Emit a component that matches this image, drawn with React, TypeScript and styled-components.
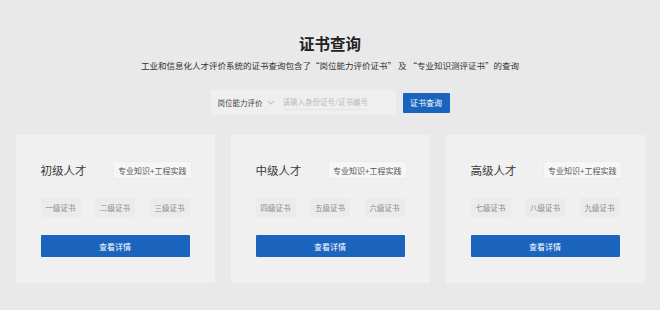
import React from 'react';
import styled, { createGlobalStyle } from 'styled-components';

const GlobalStyle = createGlobalStyle`
  html, body {
    margin: 0;
    padding: 0;
    background: #e9e9e9;
  }
  body {
    font-family: "Noto Sans CJK SC", "Noto Sans", sans-serif;
  }
`;

const Page = styled.div`
  width: 660px;
  height: 310px;
  padding-top: 33px;
  box-sizing: border-box;
  display: flex;
  flex-direction: column;
  align-items: center;
`;

const Title = styled.h1`
  margin: 0;
  font-size: 15.5px;
  line-height: 20px;
  font-weight: 700;
  color: #222;
`;

const Subtitle = styled.p`
  margin: 5px 0 0;
  font-size: 8.5px;
  line-height: 14px;
  color: #333;
`;

const SearchRow = styled.div`
  margin-top: 18px;
  display: flex;
  align-items: center;
  gap: 7px;
`;

const SearchBox = styled.div`
  width: 185px;
  height: 25px;
  background: #efefef;
  display: flex;
  align-items: center;
  padding-left: 7px;
  box-sizing: border-box;
`;

const Select = styled.div`
  display: flex;
  align-items: center;
  gap: 4px;
  font-size: 7.5px;
  color: #444;
  width: 65px;
`;

const Chevron = styled.span`
  width: 4px;
  height: 4px;
  border-right: 1px solid #bbb;
  border-bottom: 1px solid #bbb;
  transform: rotate(45deg) translateY(-2px);
`;

const Placeholder = styled.div`
  font-size: 7.5px;
  color: #bbb;
  padding-bottom: 2px;
  border-bottom: 1px solid #e4e4e4;
`;

const SearchButton = styled.button`
  width: 47px;
  height: 20px;
  border: none;
  border-radius: 1px;
  background: #1b64be;
  color: #fff;
  font-family: inherit;
  font-size: 8px;
  padding: 0;
`;

const Cards = styled.div`
  margin-top: 20px;
  display: grid;
  grid-template-columns: repeat(3, 199px);
  gap: 16px;
`;

const Card = styled.div`
  height: 148px;
  background: #f0f0f1;
  padding: 26px 25px;
  box-sizing: border-box;
  display: flex;
  flex-direction: column;
`;

const CardHead = styled.div`
  display: flex;
  align-items: center;
  justify-content: space-between;
  height: 18px;
`;

const CardTitle = styled.div`
  font-size: 11.5px;
  color: #3a3a3a;
`;

const Tag = styled.div`
  height: 18px;
  padding: 0 4px;
  box-sizing: border-box;
  margin-right: -2px;
  display: flex;
  align-items: center;
  background: #f6f6f6;
  border: 1px solid #ececec;
  font-size: 8px;
  color: #555;
`;

const Chips = styled.div`
  margin-top: 19px;
  display: flex;
  justify-content: space-between;
`;

const Chip = styled.div`
  width: 40px;
  height: 19px;
  display: flex;
  align-items: center;
  justify-content: center;
  background: #ebebeb;
  font-size: 7.5px;
  color: #8a8a8a;
`;

const DetailButton = styled.button`
  margin-top: 18px;
  height: 22px;
  width: 100%;
  border: none;
  border-radius: 1px;
  background: #1b64be;
  color: #fff;
  font-family: inherit;
  font-size: 8px;
  padding: 0;
`;

const levels = [
  { title: '初级人才', certs: ['一级证书', '二级证书', '三级证书'] },
  { title: '中级人才', certs: ['四级证书', '五级证书', '六级证书'] },
  { title: '高级人才', certs: ['七级证书', '八级证书', '九级证书'] },
];

export default function App() {
  return (
    <>
      <GlobalStyle />
      <Page>
        <Title>证书查询</Title>
        <Subtitle>
          工业和信息化人才评价系统的证书查询包含了“岗位能力评价证书” 及 “专业知识测评证书”的查询
        </Subtitle>
        <SearchRow>
          <SearchBox>
            <Select>
              岗位能力评价
              <Chevron />
            </Select>
            <Placeholder>请输入身份证号/证书编号</Placeholder>
          </SearchBox>
          <SearchButton>证书查询</SearchButton>
        </SearchRow>
        <Cards>
          {levels.map((level) => (
            <Card key={level.title}>
              <CardHead>
                <CardTitle>{level.title}</CardTitle>
                <Tag>专业知识+工程实践</Tag>
              </CardHead>
              <Chips>
                {level.certs.map((c) => (
                  <Chip key={c}>{c}</Chip>
                ))}
              </Chips>
              <DetailButton>查看详情</DetailButton>
            </Card>
          ))}
        </Cards>
      </Page>
    </>
  );
}
